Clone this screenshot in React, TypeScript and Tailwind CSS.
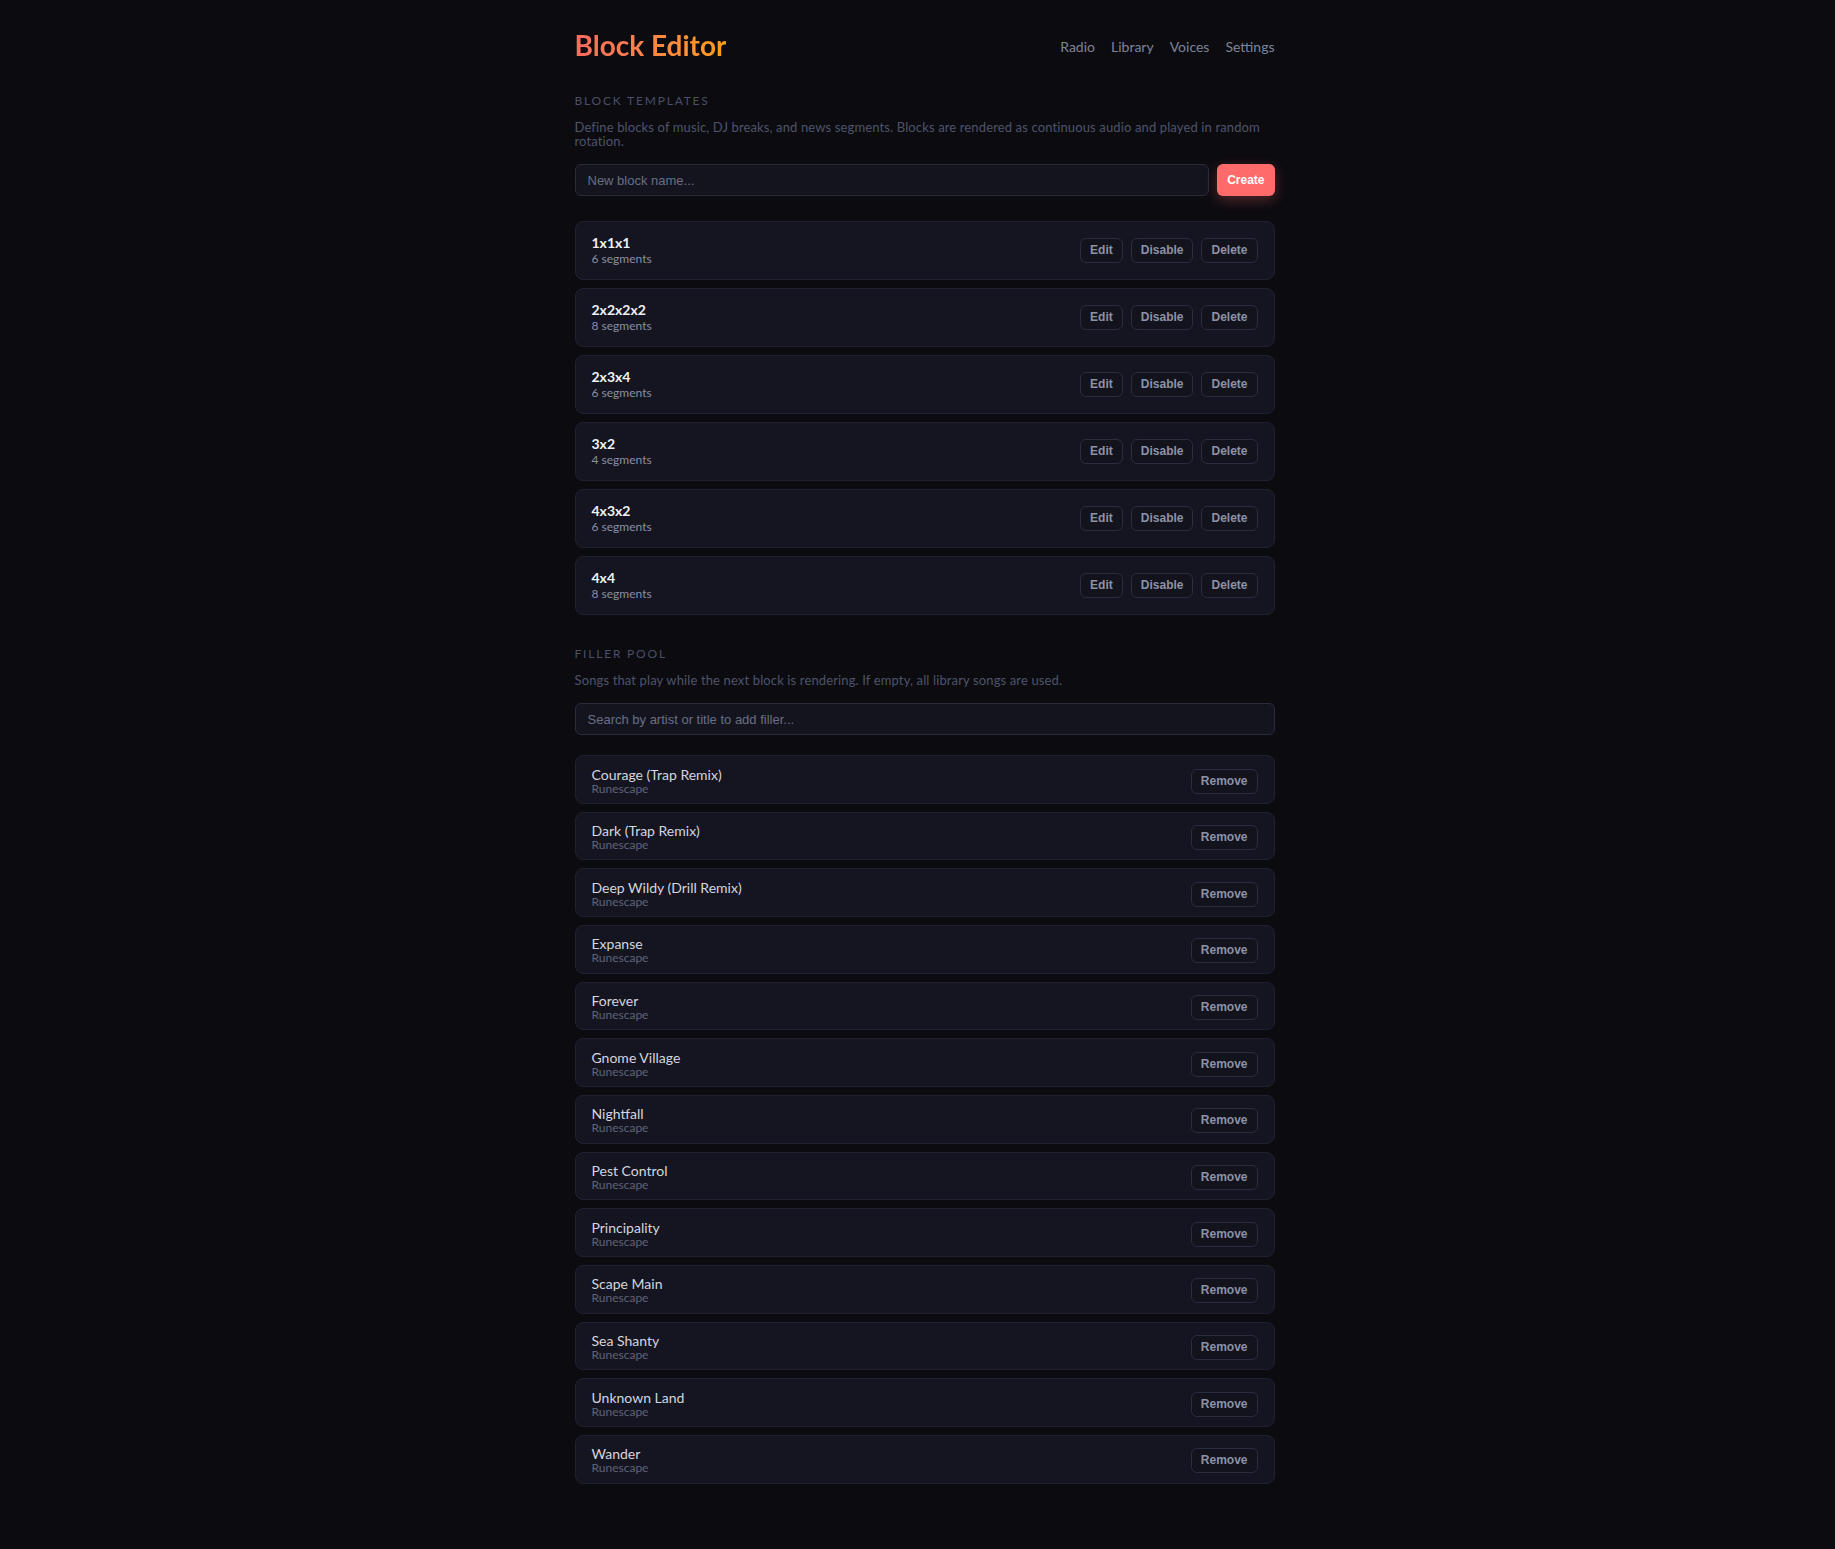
import React from "react"

const blocks = [
  { name: "1x1x1", segments: 6 },
  { name: "2x2x2x2", segments: 8 },
  { name: "2x3x4", segments: 6 },
  { name: "3x2", segments: 4 },
  { name: "4x3x2", segments: 6 },
  { name: "4x4", segments: 8 },
]

const fillers = [
  "Courage (Trap Remix)",
  "Dark (Trap Remix)",
  "Deep Wildy (Drill Remix)",
  "Expanse",
  "Forever",
  "Gnome Village",
  "Nightfall",
  "Pest Control",
  "Principality",
  "Scape Main",
  "Sea Shanty",
  "Unknown Land",
  "Wander",
]

const ui = "font-['Lato','Noto_Sans',sans-serif]"
const btn =
  "rounded-md border border-[#2a2d3d] bg-[#12131c] px-[9px] py-[5px] text-[12px] leading-[13px] font-bold text-[#8d92a6] font-['Liberation_Sans',Arial,sans-serif] hover:text-white"

function SectionHead({ title, children }: { title: string; children: React.ReactNode }) {
  return (
    <>
      <h2 className="text-[12px] leading-[16px] tracking-[0.15em] uppercase text-[#4a4f66]">
        {title}
      </h2>
      <p className="mt-[11px] text-[13px] leading-[14px] tracking-[0.01em] text-[#4f546a]">{children}</p>
    </>
  )
}

export default function App() {
  return (
    <div className={`min-h-screen bg-[#0b0b10] pb-16 ${ui}`}>
      <div className="ml-[calc(50%-343px)] w-[700px] pt-7">
        <header className="flex items-center justify-between">
          <h1 className="bg-gradient-to-r from-[#ff6b5e] to-[#ff9d14] bg-clip-text text-[28px] leading-[34px] font-bold text-transparent">
            Block Editor
          </h1>
          <nav className="mt-[3px] flex gap-4 text-[14px] leading-[16px] text-[#7f8499]">
            <a href="#">Radio</a>
            <a href="#">Library</a>
            <a href="#">Voices</a>
            <a href="#">Settings</a>
          </nav>
        </header>

        <section className="mt-[31px]">
          <SectionHead title="Block Templates">
            Define blocks of music, DJ breaks, and news segments. Blocks are rendered as continuous audio and played in random rotation.
          </SectionHead>
          <div className="mt-4 flex gap-2">
            <input
              placeholder="New block name..."
              className="h-[32px] flex-1 rounded-md border border-[#2a2c3b] bg-[#13141e] px-3 text-[13px] text-white outline-none placeholder:text-[#6b6f82] font-['Liberation_Sans',Arial,sans-serif]"
            />
            <button className="h-[32px] rounded-md bg-[#ff6b6b] px-[10px] text-[12px] font-bold text-white shadow-[0_4px_14px_rgba(255,107,107,0.3)] font-['Liberation_Sans',Arial,sans-serif]">
              Create
            </button>
          </div>
          <div className="mt-[25px] flex flex-col gap-2">
            {blocks.map((b) => (
              <div
                key={b.name}
                className="flex items-center justify-between rounded-lg border border-[#1f2131] bg-[#141520] px-4 pt-[11.5px] pb-[13.5px]"
              >
                <div>
                  <div className="text-[14px] leading-[17px] font-bold text-[#f0f1f5]">{b.name}</div>
                  <div className="text-[12px] leading-[15px] text-[#8a8fa3]">{b.segments} segments</div>
                </div>
                <div className="mt-[2px] flex gap-2">
                  <button className={btn}>Edit</button>
                  <button className={btn}>Disable</button>
                  <button className={btn}>Delete</button>
                </div>
              </div>
            ))}
          </div>
        </section>

        <section className="mt-[31px]">
          <SectionHead title="Filler Pool">
            Songs that play while the next block is rendering. If empty, all library songs are used.
          </SectionHead>
          <input
            placeholder="Search by artist or title to add filler..."
            className="mt-4 block h-[32px] w-full rounded-md border border-[#2a2c3b] bg-[#13141e] px-3 text-[13px] text-white outline-none placeholder:text-[#6b6f82] font-['Liberation_Sans',Arial,sans-serif]"
          />
          <div className="mt-5 flex flex-col gap-2">
            {fillers.map((title) => (
              <div
                key={title}
                className="flex items-center justify-between rounded-lg border border-[#1f2131] bg-[#141520] px-4 pt-[11.5px] pb-[7.16px]"
              >
                <div>
                  <div className="text-[14px] leading-[14px] text-[#d4d6df]">{title}</div>
                  <div className="text-[12px] leading-[14px] text-[#5f6479]">Runescape</div>
                </div>
                <button className={`${btn} -mt-[1px]`}>Remove</button>
              </div>
            ))}
          </div>
        </section>
      </div>
    </div>
  )
}
